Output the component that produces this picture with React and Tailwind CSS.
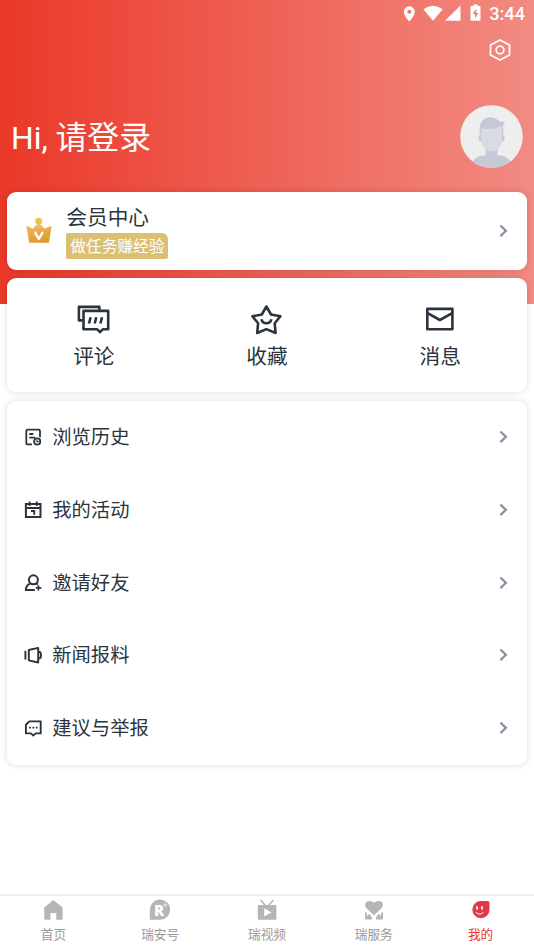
import React from "react";

const CommentIcon = () => (
  <svg width="34" height="30" viewBox="0 0 34 30" fill="none" stroke="#2b343c" strokeWidth="2.6" strokeLinejoin="round">
    <path d="M5.5 15.4H1.9V1.9H22.4V5" />
    <path d="M6.5 5.9H31.2V24.3H25.8L23 27.2L20.2 24.3H6.5Z" />
    <path d="M13.6 12.2L12 18.5M19.3 12.2L17.7 18.5M25 12.2L23.4 18.5" />
  </svg>
);

const StarIcon = () => (
  <svg width="34" height="30" viewBox="0 0 34 30" fill="none" stroke="#2b343c" strokeWidth="2.6" strokeLinejoin="round">
    <path d="M16.4 1.5L21 9.5L30.4 11.3L24.7 18.3L25.6 28L16.4 24.1L7.2 28L8.1 18.3L2.4 11.3L11.8 9.5Z" />
    <path d="M11.4 14.3C12.6 19.6 20.2 19.6 21.4 14.3" />
  </svg>
);

const MailIcon = () => (
  <svg width="34" height="30" viewBox="0 0 34 30" fill="none" stroke="#2b343c" strokeWidth="2.6" strokeLinejoin="round">
    <path d="M4.3 3.9H29.4V24.2H4.3Z" />
    <path d="M4.6 8.1L16.9 15L29.2 8.1" />
  </svg>
);

const HistoryIcon = () => (
  <svg width="18" height="18" viewBox="0 0 18 18" fill="none" stroke="#2b343c" strokeWidth="1.8">
    <path d="M8 16.4H3.5Q2.3 16.4 2.3 15.2V2.9Q2.3 1.7 3.5 1.7H14.8Q16 1.7 16 2.9V9.2" />
    <path d="M5.3 6H9.3M5.3 9.7H11.3" />
    <circle cx="13.2" cy="13.5" r="3.1" />
    <path d="M13 11.8V13.7H14.9" strokeWidth="1.2" />
  </svg>
);

const CalendarIcon = () => (
  <svg width="18" height="18" viewBox="0 0 18 18" fill="none" stroke="#2b343c" strokeWidth="2">
    <path d="M1.9 3.1H16.5V16H1.9ZM1.9 6.9H16.5" />
    <path d="M5.6 0.6V5M12.8 0.6V5" strokeWidth="1.8" />
    <path d="M7 10H10.2V13.7" strokeWidth="1.9" />
  </svg>
);

const InviteIcon = () => (
  <svg width="18" height="18" viewBox="0 0 18 18" fill="none" stroke="#2b343c" strokeWidth="2">
    <circle cx="9.4" cy="5.8" r="4.5" />
    <path d="M6.2 9.6C3.4 10.6 2 12.6 1.9 16H10.8M12.2 9.4L13.9 10.5" />
    <path d="M14.4 11.2V16.5M11.7 13.8H17.3" strokeWidth="1.7" />
  </svg>
);

const NewsIcon = () => (
  <svg width="18" height="18" viewBox="0 0 18 18" fill="none" stroke="#2b343c" strokeWidth="1.9" strokeLinejoin="round">
    <path d="M1.4 4.8V13.6" />
    <path d="M4.8 4L14.2 1.9V16.5L4.8 14.3Z" />
    <path d="M14.6 5.8Q17 5.8 17 9.2Q17 12.6 14.6 12.6" />
  </svg>
);

const FeedbackIcon = () => (
  <svg width="18" height="18" viewBox="0 0 18 18" fill="none" stroke="#2b343c" strokeWidth="1.9" strokeLinejoin="round">
    <path d="M5.4 2.4H16.7V14.4H11.6L9.3 16.6L7 14.4H1.9V5.8Z" />
    <path d="M5.2 8.6H6.9M8.5 8.6H10.2M11.8 8.6H13.5" strokeWidth="1.9" />
  </svg>
);

const CrownIcon = () => (
  <svg width="26" height="28" viewBox="0 0 26 28">
    <defs>
      <linearGradient id="crown" x1="0" y1="0" x2="0.4" y2="1">
        <stop offset="0" stopColor="#f2ba66" />
        <stop offset="1" stopColor="#dc9c2b" />
      </linearGradient>
    </defs>
    <path d="M1 8.8Q0.3 8.8 0.5 9.6L3.2 25.8H23L25.5 9.6Q25.6 8.8 24.8 9L18.4 11.8L15 8H10.2L7 11.8Z" fill="url(#crown)" />
    <circle cx="12.7" cy="4.2" r="3.4" fill="#efc052" />
    <path d="M12.7 5L16 11H9.4Z" fill="#f0bb5e" />
    <path d="M9.3 15.8L12.8 22L16.4 15.8" fill="none" stroke="#fff" strokeWidth="2.4" strokeLinecap="round" strokeLinejoin="round" />
  </svg>
);

const Chevron = () => (
  <svg width="10" height="14" viewBox="0 0 10 14" fill="none" stroke="#8b91a5" strokeWidth="2.3">
    <path d="M1.4 1.5L6.9 6.8L1.4 12.1" />
  </svg>
);

const Avatar = () => (
  <svg width="63" height="63" viewBox="0 0 63 63">
    <defs>
      <clipPath id="avatar">
        <circle cx="31.5" cy="31.5" r="31.3" />
      </clipPath>
    </defs>
    <g clipPath="url(#avatar)">
      <rect width="63" height="63" fill="#eeeeee" />
      <path d="M10 63C13 54 17 50.5 24 50.5H39C46 50.5 50 54 53 63Z" fill="#c4c9d5" />
      <path d="M25.5 43H37.5V51Q31.5 53 25.5 51Z" fill="#c4c9d5" />
      <ellipse cx="20.7" cy="33" rx="2.2" ry="3.5" fill="#c4c9d5" />
      <ellipse cx="42.3" cy="33" rx="2.2" ry="3.5" fill="#c4c9d5" />
      <path d="M21 22H42V33C42 42 37 46.5 31.5 46.5S21 42 21 33Z" fill="#d8dbe2" />
      <path d="M20 30C19 23 20 16.5 24.5 14C29 11 35 12.5 38 15.2Q41 17.5 44.6 16.5Q44.8 19 42.8 20.3Q44 25 42.9 30L41.6 28V21C36 24.5 27 24.8 21.3 22.8V28Z" fill="#c4c9d5" />
    </g>
  </svg>
);

const HomeTab = () => (
  <svg width="22" height="22" viewBox="0 0 22 22" fill="#b4b6b6">
    <path d="M11.3 1L20.6 8.4V19.5Q20.6 20.8 19.3 20.8H14.3V14H8.5V20.8H3.5Q2.2 20.8 2.2 19.5V8.4Z" />
  </svg>
);

const NumberTab = () => (
  <svg width="22" height="22" viewBox="0 0 22 22">
    <path d="M0.8 20.8V11A10.2 10.2 0 1 1 11 20.8Z" fill="#b4b6b6" />
    <text x="5" y="16.8" fontSize="15" fontWeight="900" fill="#fff" fontFamily="Open Sans, Noto Sans, sans-serif">R</text>
    <path d="M16.3 3.7V8.1M14.1 5.9H18.5" stroke="#e6e7e7" strokeWidth="1" />
  </svg>
);

const VideoTab = () => (
  <svg width="22" height="22" viewBox="0 0 22 22">
    <path d="M4.5 1L9.5 6.5M17.5 1L12.5 6.5" stroke="#b4b6b6" strokeWidth="1.5" />
    <rect x="1.8" y="6" width="18.6" height="14.8" rx="1" fill="#b4b6b6" />
    <path d="M8.2 9.2L15.4 13.4L8.2 17.6Z" fill="#fff" />
  </svg>
);

const ServiceTab = () => (
  <svg width="22" height="22" viewBox="0 0 22 22" fill="#b4b6b6">
    <path d="M11 16.3L3.7 9.4C0.7 6.3 2.1 2 6.2 2Q9.2 2 11 3.8Q12.8 2 15.8 2C19.9 2 21.3 6.3 18.3 9.4Z" />
    <path d="M2 13.2L4.1 14V17.4L6.2 14.8L9 18.2V20.6H3.2Q2 20.6 2 19.4ZM20 13.2L17.9 14V17.4L15.8 14.8L13 18.2V20.6H18.8Q20 20.6 20 19.4Z" />
  </svg>
);

const MineTab = () => (
  <svg width="22" height="22" viewBox="0 0 22 22">
    <path d="M11 2H17.8Q19.5 2 19.5 3.7V10.7A8.6 8.6 0 1 1 11 2Z" fill="#e3384a" />
    <path d="M7 7.2V10.4M12 7.2V10.4" stroke="#fff" strokeWidth="1.7" />
    <path d="M5.8 13.2Q9.7 17.2 13.4 13.2" fill="none" stroke="#fff" strokeWidth="1" />
  </svg>
);

const shortcuts = [
  { label: "评论", icon: <CommentIcon /> },
  { label: "收藏", icon: <StarIcon /> },
  { label: "消息", icon: <MailIcon /> },
];

const menu = [
  { label: "浏览历史", icon: <HistoryIcon /> },
  { label: "我的活动", icon: <CalendarIcon /> },
  { label: "邀请好友", icon: <InviteIcon /> },
  { label: "新闻报料", icon: <NewsIcon /> },
  { label: "建议与举报", icon: <FeedbackIcon /> },
];

const tabs = [
  { label: "首页", icon: <HomeTab /> },
  { label: "瑞安号", icon: <NumberTab /> },
  { label: "瑞视频", icon: <VideoTab /> },
  { label: "瑞服务", icon: <ServiceTab /> },
  { label: "我的", icon: <MineTab />, active: true },
];

const App = () => {
  return (
    <div className="flex h-[950px] w-[534px] flex-col overflow-hidden bg-white bg-[linear-gradient(to_right,#ea3829,#f28b82)] bg-[length:100%_304px] bg-no-repeat font-['Roboto','Noto_Sans_CJK_SC',sans-serif] text-[#2b343c]">
      {/* Status bar */}
      <div className="flex h-7 shrink-0 items-center justify-end pr-[9px] text-white">
        <svg width="76" height="20" viewBox="0 0 76 20" fill="#fff">
          <path fillRule="evenodd" d="M11.3 2.3A5.5 5.5 0 0 0 5.8 7.8C5.8 11.8 11.3 17.6 11.3 17.6S16.8 11.8 16.8 7.8A5.5 5.5 0 0 0 11.3 2.3ZM11.3 5.8A2 2 0 1 1 11.3 9.8A2 2 0 0 1 11.3 5.8Z" />
          <path d="M25.4 5.2Q35 -1.8 44.7 5.2L35 16.7Z" />
          <path d="M62.5 1.5V16.7H47Z" />
        </svg>
        <svg width="11" height="20" viewBox="0 0 11 20" className="-ml-1">
          <path d="M3.3 2V0.5H7.7V2H10Q10.5 2 10.5 2.7V16Q10.5 16.7 10 16.7H1Q0.5 16.7 0.5 16V2.7Q0.5 2 1 2Z" fill="#fff" />
          <path d="M6.3 4.5L2.8 10H5V14.5L8.3 9H6.2Z" fill="#ef7d73" />
        </svg>
        <span className="ml-2 text-[18.2px] leading-7 font-medium">3:44</span>
      </div>

      {/* Settings */}
      <div className="flex h-[45px] shrink-0 justify-end pt-[10px] pr-[22px]">
        <svg width="24" height="24" viewBox="0 0 24 24" fill="none" stroke="#fff" strokeWidth="1.7" strokeLinejoin="round">
          <path d="M12 1.9L21.5 7.1V16.9L12 22.1L2.5 16.9V7.1Z" />
          <circle cx="12" cy="12" r="3.9" />
        </svg>
      </div>

      {/* Greeting */}
      <div className="mt-8 flex h-[63px] shrink-0 items-center justify-between pr-[11px] pl-[11px]">
        <h1 className="pt-1 text-[31.8px] leading-none text-white">Hi, 请登录</h1>
        <Avatar />
      </div>

      <main className="flex flex-col px-[7.3px] pt-6">
        {/* Membership */}
        <section className="flex h-[78px] items-center rounded-[9px] bg-white pr-[18px] pl-[19px] shadow-[0_0_7px_rgba(0,0,0,0.14)]">
          <CrownIcon />
          <div className="ml-[14px] flex flex-1 flex-col items-start">
            <h2 className="pt-px text-[20.7px] leading-[29px]">会员中心</h2>
            <span className="h-[26px] rounded-[2px] rounded-tr-md bg-[#dcc072] px-[4px] text-[15.7px] leading-[28px] text-white">做任务赚经验</span>
          </div>
          <Chevron />
        </section>

        {/* Shortcuts */}
        <section className="mt-[7.5px] grid h-[114.5px] grid-cols-3 rounded-[9px] bg-white pt-[27px] shadow-[0_0_7px_rgba(0,0,0,0.14)]">
          {shortcuts.map((item) => (
            <div key={item.label} className="flex flex-col items-center">
              {item.icon}
              <span className="mt-[7px] text-[20.7px] leading-[30px]">{item.label}</span>
            </div>
          ))}
        </section>

        {/* Menu */}
        <section className="mt-[8.8px] rounded-[9px] bg-white shadow-[0_0_7px_rgba(0,0,0,0.14)]">
          {menu.map((item) => (
            <div key={item.label} className="flex h-[72.75px] items-center pr-[18px] pl-[17px]">
              {item.icon}
              <span className="ml-[10px] flex-1 pt-[3px] text-[19.3px]">{item.label}</span>
              <Chevron />
            </div>
          ))}
        </section>
      </main>

      {/* Tab bar */}
      <nav className="mt-auto grid h-14 shrink-0 grid-cols-5 border-t-2 border-[#eeeeee] bg-white">
        {tabs.map((tab) => (
          <div key={tab.label} className="flex flex-col items-center pt-[3px]">
            {tab.icon}
            <span className={tab.active ? "mt-[5px] text-[12.7px] leading-[18px] text-[#ea3829]" : "mt-[5px] text-[12.7px] leading-[18px] text-[#999999]"}>
              {tab.label}
            </span>
          </div>
        ))}
      </nav>
    </div>
  );
};

export default App;
